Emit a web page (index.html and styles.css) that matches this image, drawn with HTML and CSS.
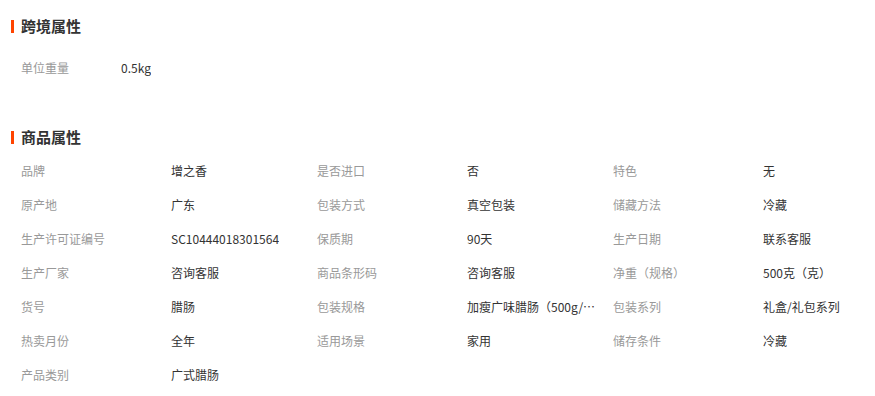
FILE: index.html
```html
<!DOCTYPE html>
<html lang="zh-CN">
<head>
<meta charset="utf-8">
<link rel="stylesheet" href="styles.css">
</head>
<body>
<div class="page">
  <section class="block">
    <h3 class="title"><span class="bar"></span>跨境属性</h3>
    <div class="single">
      <div class="cell"><span class="label">单位重量</span><span class="value short">0.5kg</span></div>
    </div>
  </section>
  <section class="block second">
    <h3 class="title"><span class="bar"></span>商品属性</h3>
    <div class="grid">
      <div class="cell"><span class="label">品牌</span><span class="value">增之香</span></div>
      <div class="cell"><span class="label">是否进口</span><span class="value">否</span></div>
      <div class="cell"><span class="label">特色</span><span class="value">无</span></div>
      <div class="cell"><span class="label">原产地</span><span class="value">广东</span></div>
      <div class="cell"><span class="label">包装方式</span><span class="value">真空包装</span></div>
      <div class="cell"><span class="label">储藏方法</span><span class="value">冷藏</span></div>
      <div class="cell"><span class="label">生产许可证编号</span><span class="value">SC10444018301564</span></div>
      <div class="cell"><span class="label">保质期</span><span class="value">90天</span></div>
      <div class="cell"><span class="label">生产日期</span><span class="value">联系客服</span></div>
      <div class="cell"><span class="label">生产厂家</span><span class="value">咨询客服</span></div>
      <div class="cell"><span class="label">商品条形码</span><span class="value">咨询客服</span></div>
      <div class="cell"><span class="label">净重（规格）</span><span class="value">500克（克）</span></div>
      <div class="cell"><span class="label">货号</span><span class="value">腊肠</span></div>
      <div class="cell"><span class="label">包装规格</span><span class="value">加瘦广味腊肠（500g/包）</span></div>
      <div class="cell"><span class="label">包装系列</span><span class="value">礼盒/礼包系列</span></div>
      <div class="cell"><span class="label">热卖月份</span><span class="value">全年</span></div>
      <div class="cell"><span class="label">适用场景</span><span class="value">家用</span></div>
      <div class="cell"><span class="label">储存条件</span><span class="value">冷藏</span></div>
      <div class="cell"><span class="label">产品类别</span><span class="value">广式腊肠</span></div>
    </div>
  </section>
</div>
</body>
</html>
```
FILE: styles.css
```css
* { box-sizing: border-box; }
html, body {
  margin: 0;
  padding: 0;
  background: #fff;
  font-family: "Noto Sans CJK SC", "Liberation Sans", sans-serif;
  font-size: 12px;
  color: #333;
}
.page {
  width: 875px;
  padding-top: 16px;
}
.block.second {
  margin-top: 42px;
}
.title {
  display: flex;
  align-items: center;
  margin: 0;
  height: 20px;
  line-height: 20px;
  padding-left: 11px;
  font-size: 15px;
  font-weight: bold;
  color: #333;
}
.bar {
  display: inline-block;
  width: 3px;
  height: 13px;
  background: #ff4400;
  margin-right: 7px;
}
.single {
  padding: 15px 0 0 21px;
}
.grid {
  padding: 7px 0 0 21px;
  display: grid;
  grid-template-columns: 296px 296px 283px;
}
.cell {
  display: flex;
  height: 34px;
  align-items: center;
  line-height: 34px;
}
.label {
  width: 150px;
  flex: none;
  color: #999;
}
.single .label {
  width: 100px;
}
.value {
  color: #333;
  max-width: 131px;
  white-space: nowrap;
  overflow: hidden;
  text-overflow: ellipsis;
}
```
